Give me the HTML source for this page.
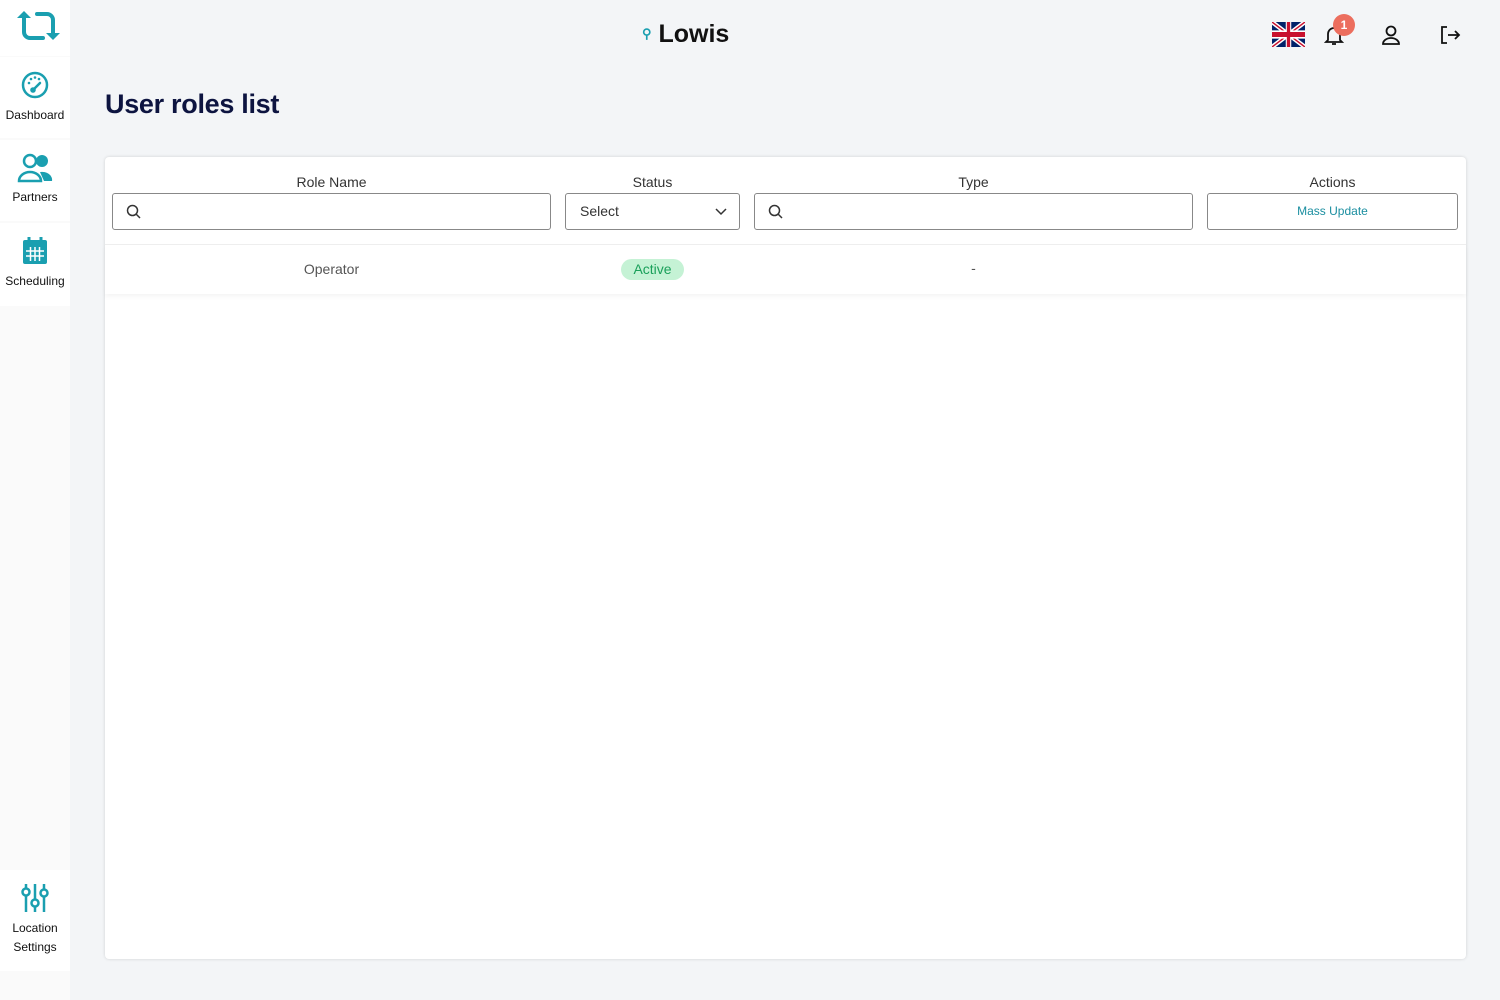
<!DOCTYPE html>
<html><head><style>
*{box-sizing:border-box;margin:0;padding:0}
body{width:1500px;height:1000px;background:#f3f5f7;font-family:"Liberation Sans",sans-serif;position:relative;overflow:hidden;color:#222}
.side{position:absolute;left:0;top:0;width:70px;height:1000px;background:#fafafa}
.item{position:absolute;left:0;width:70px;background:#fff;text-align:center;font-size:12px;color:#111}
.item svg{display:block;margin:0 auto}
.card{position:absolute;left:105px;top:157px;width:1361px;height:802px;background:#fff;border-radius:4px;box-shadow:0 0 3px rgba(0,0,0,.15)}
.h{position:absolute;top:17px;font-size:14px;color:#333;text-align:center}
.in{position:absolute;top:36px;height:37px;border:1px solid #888;border-radius:3px;background:#fff}
</style></head><body>
<div class="side">
 <div class="item" style="top:0;height:56px"><svg width="50" height="44" viewBox="0 0 50 44" style="margin-top:2px"><path d="M14 14 V30 a6 6 0 0 0 6 6 H33 M27 12 H37 a6 6 0 0 1 6 6 V32" fill="none" stroke="#1a9fb0" stroke-width="4" stroke-linecap="round"/><path d="M7 16 l7-7 l7 7z" fill="#1a9fb0"/><path d="M36 31 l7 7 l7-7z" fill="#1a9fb0"/></svg></div>
 <div class="item" style="top:57px;height:81px"><svg width="30" height="30" viewBox="0 0 30 30" style="margin-top:13px"><circle cx="15" cy="15" r="12" fill="none" stroke="#1a9fb0" stroke-width="2.5"/><circle cx="9" cy="13" r="1.3" fill="#1a9fb0"/><circle cx="11" cy="9" r="1.3" fill="#1a9fb0"/><circle cx="15" cy="7.5" r="1.3" fill="#1a9fb0"/><circle cx="19" cy="9" r="1.3" fill="#1a9fb0"/><path d="M13 20 l7-7" stroke="#1a9fb0" stroke-width="2.5" stroke-linecap="round"/><circle cx="13" cy="20" r="2.8" fill="#1a9fb0"/></svg><div style="margin-top:8px">Dashboard</div></div>
 <div class="item" style="top:140px;height:81px"><svg width="38" height="30" viewBox="0 0 38 30" style="margin-top:13px"><circle cx="14" cy="8" r="6" fill="none" stroke="#1a9fb0" stroke-width="2.5"/><circle cx="26" cy="8" r="6" fill="#1a9fb0"/><path d="M3 28 a11 9 0 0 1 22 0z" fill="none" stroke="#1a9fb0" stroke-width="2.5"/><path d="M24 19 a10 8 0 0 1 12 9 h-8z" fill="#1a9fb0"/></svg><div style="margin-top:7px">Partners</div></div>
 <div class="item" style="top:223px;height:83px"><svg width="26" height="30" viewBox="0 0 26 30" style="margin-top:13px"><rect x="1" y="4" width="24" height="24" rx="2" fill="#1a9fb0"/><path d="M7 1v6M19 1v6" stroke="#1a9fb0" stroke-width="3"/><rect x="4" y="11" width="18" height="14" fill="none"/><path d="M4 15h18M4 20h18M8.5 11v14M13 11v14M17.5 11v14" stroke="#fff" stroke-width="1.5"/></svg><div style="margin-top:8px">Scheduling</div></div>
 <div class="item" style="top:870px;height:101px"><svg width="30" height="32" viewBox="0 0 30 32" style="margin-top:12px"><path d="M6 2v28M15 2v28M24 2v28" stroke="#1a9fb0" stroke-width="2.5"/><circle cx="6" cy="10" r="3.5" fill="#fff" stroke="#1a9fb0" stroke-width="2.5"/><circle cx="15" cy="21" r="3.5" fill="#fff" stroke="#1a9fb0" stroke-width="2.5"/><circle cx="24" cy="11" r="3.5" fill="#fff" stroke="#1a9fb0" stroke-width="2.5"/></svg><div style="margin-top:5px;line-height:19px">Location<br>Settings</div></div>
</div>
<div style="position:absolute;left:642px;top:20px;font-size:25px;font-weight:bold;color:#111"><span style="color:#1a9fb0;font-size:13px;vertical-align:4px">⚲</span> Lowis</div>
<svg style="position:absolute;left:1272px;top:22px" width="33" height="25" viewBox="0 0 60 30" preserveAspectRatio="none"><rect width="60" height="30" fill="#012169"/><path d="M0 0L60 30M60 0L0 30" stroke="#fff" stroke-width="6"/><path d="M0 0L60 30M60 0L0 30" stroke="#C8102E" stroke-width="2"/><path d="M30 0v30M0 15h60" stroke="#fff" stroke-width="10"/><path d="M30 0v30M0 15h60" stroke="#C8102E" stroke-width="6"/></svg>
<svg style="position:absolute;left:1324px;top:24px" width="20" height="22" viewBox="0 0 20 22"><path d="M4 16V10a6 6 0 0 1 12 0v6l2 2H2z M8 20h4" fill="none" stroke="#111" stroke-width="1.8"/></svg>
<div style="position:absolute;left:1333px;top:14px;width:22px;height:22px;border-radius:50%;background:#ec6e5e;color:#fff;font-size:12px;font-weight:bold;text-align:center;line-height:22px">1</div>
<svg style="position:absolute;left:1381px;top:24px" width="20" height="22" viewBox="0 0 20 22"><circle cx="10" cy="7" r="4.5" fill="none" stroke="#111" stroke-width="1.8"/><path d="M2 20a8 6 0 0 1 16 0z" fill="none" stroke="#111" stroke-width="1.8"/></svg>
<svg style="position:absolute;left:1439px;top:24px" width="22" height="22" viewBox="0 0 22 22"><path d="M8 3H3v16h5M9 11h11M16 7l4 4-4 4" fill="none" stroke="#111" stroke-width="1.8"/></svg>
<div style="position:absolute;left:105px;top:89px;font-size:27px;font-weight:bold;color:#0d1440;letter-spacing:-0.3px">User roles list</div>
<div class="card">
 <div class="h" style="left:7px;width:439px">Role Name</div>
 <div class="h" style="left:460px;width:175px">Status</div>
 <div class="h" style="left:649px;width:439px">Type</div>
 <div class="h" style="left:1102px;width:251px">Actions</div>
 <div class="in" style="left:7px;width:439px"><svg style="position:absolute;left:13px;top:10px" width="16" height="16" viewBox="0 0 16 16"><circle cx="6.5" cy="6.5" r="5" fill="none" stroke="#333" stroke-width="1.5"/><path d="M10 10l4 4" stroke="#333" stroke-width="1.5"/></svg></div>
 <div class="in" style="left:460px;width:175px;font-size:14px;padding:9px 14px;color:#333">Select<svg style="position:absolute;right:12px;top:14px" width="12" height="8" viewBox="0 0 12 8"><path d="M1 1l5 5 5-5" fill="none" stroke="#333" stroke-width="1.5"/></svg></div>
 <div class="in" style="left:649px;width:439px"><svg style="position:absolute;left:13px;top:10px" width="16" height="16" viewBox="0 0 16 16"><circle cx="6.5" cy="6.5" r="5" fill="none" stroke="#333" stroke-width="1.5"/><path d="M10 10l4 4" stroke="#333" stroke-width="1.5"/></svg></div>
 <div class="in" style="left:1102px;width:251px;font-size:12px;color:#1a8ea0;text-align:center;line-height:35px">Mass Update</div>
 <div style="position:absolute;left:0;right:0;top:87px;border-top:1px solid #eee;height:50px;box-shadow:0 3px 4px rgba(0,0,0,.04)">
  <div style="position:absolute;left:7px;width:439px;top:16px;text-align:center;font-size:14px;color:#555">Operator</div>
  <div style="position:absolute;left:516px;top:14px;width:63px;height:21px;border-radius:11px;background:#c5f2d5;color:#1aa05a;font-size:14px;text-align:center;line-height:21px">Active</div>
  <div style="position:absolute;left:649px;width:439px;top:15px;text-align:center;font-size:14px;color:#555">-</div>
 </div>
</div>
</body></html>
